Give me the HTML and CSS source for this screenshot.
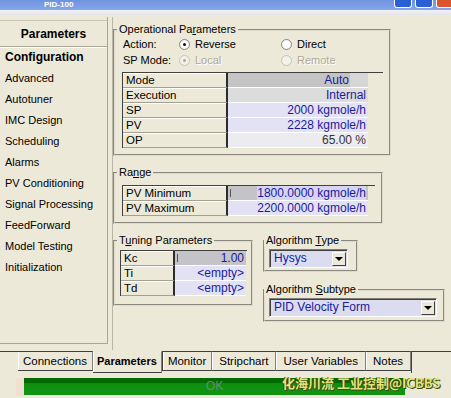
FILE: index.html
```html
<!DOCTYPE html>
<html lang="en">
<head>
    <meta charset="UTF-8">
    <title>PID-100</title>
    <link rel="stylesheet" href="styles.css">
</head>
<body>
    <div id="win">
        <div class="titlebar">
            <span class="title">PID-100</span>
            <div class="tb_btns">
                <span class="tb_btn"></span>
                <span class="tb_btn"></span>
                <span class="tb_btn close"></span>
            </div>
        </div>
        <div class="strip"></div>

        <div class="main">
            <div class="sidebar">
                <div class="side_head">Parameters</div>
                <ul class="side_list">
                    <li class="active">Configuration</li>
                    <li>Advanced</li>
                    <li>Autotuner</li>
                    <li>IMC Design</li>
                    <li>Scheduling</li>
                    <li>Alarms</li>
                    <li>PV Conditioning</li>
                    <li>Signal Processing</li>
                    <li>FeedForward</li>
                    <li>Model Testing</li>
                    <li>Initialization</li>
                </ul>
            </div>

            <div class="content">
                <fieldset class="group group_op">
                    <legend>Operational Pa<u>r</u>ameters</legend>
                    <div class="radio_row">
                        <span class="lbl">Action:</span>
                        <span class="radio"><i class="dot on"></i>Reverse</span>
                        <span class="radio"><i class="dot"></i>Direct</span>
                    </div>
                    <div class="radio_row">
                        <span class="lbl">SP Mode:</span>
                        <span class="radio off"><i class="dot on"></i>Local</span>
                        <span class="radio off"><i class="dot"></i>Remote</span>
                    </div>
                    <div class="grid grid_op">
                        <div class="key">Mode</div>
                        <div class="val v_mode"><span>Auto</span><b class="v_btn"></b></div>
                        <div class="key">Execution</div>
                        <div class="val v_grey">Internal</div>
                        <div class="key">SP</div>
                        <div class="val">2000 kgmole/h</div>
                        <div class="key">PV</div>
                        <div class="val">2228 kgmole/h</div>
                        <div class="key">OP</div>
                        <div class="val v_light">65.00 %</div>
                    </div>
                </fieldset>

                <fieldset class="group group_range">
                    <legend>Ra<u>n</u>ge</legend>
                    <div class="grid grid_op">
                        <div class="key">PV Minimum</div>
                        <div class="val v_edit"><i class="caret"></i><span class="sel">1800.0000 kgmole/h</span></div>
                        <div class="key">PV Maximum</div>
                        <div class="val">2200.0000 kgmole/h</div>
                    </div>
                </fieldset>

                <div class="bottom_row">
                    <fieldset class="group group_tuning">
                        <legend>T<u>u</u>ning Parameters</legend>
                        <div class="grid grid_tune">
                            <div class="key">Kc</div>
                            <div class="val v_edit"><i class="caret"></i><span>1.00</span></div>
                            <div class="key">Ti</div>
                            <div class="val">&lt;empty&gt;</div>
                            <div class="key">Td</div>
                            <div class="val">&lt;empty&gt;</div>
                        </div>
                    </fieldset>

                    <div class="algo_col">
                        <fieldset class="group group_type">
                            <legend>Algorithm <u>T</u>ype</legend>
                            <div class="combo combo_type">
                                <span class="combo_text">Hysys</span>
                                <span class="combo_btn"><i></i></span>
                            </div>
                        </fieldset>
                        <fieldset class="group group_sub">
                            <legend>Algorithm <u>S</u>ubtype</legend>
                            <div class="combo combo_sub">
                                <span class="combo_text">PID Velocity Form</span>
                                <span class="combo_btn"><i></i></span>
                            </div>
                        </fieldset>
                    </div>
                </div>
            </div>
        </div>

        <ul class="tabs">
            <li class="tab_gap"></li>
            <li class="tab">Connections</li>
            <li class="tab active">Parameters</li>
            <li class="tab boxed">Monitor</li>
            <li class="tab wide">Stripchart</li>
            <li class="tab wide">User Variables</li>
            <li class="tab wide">Notes</li>
            <li class="tab_rest"></li>
        </ul>

        <div class="status">
            <span class="status_edge"></span>
            <div class="status_bar">OK</div>
            <span class="watermark">化海川流 工业控制@ICBBS</span>
        </div>
    </div>
</body>
</html>
```

FILE: styles.css
```css
* {
    margin: 0;
    padding: 0;
    list-style: none;
    box-sizing: border-box;
}

body {
    background-color: #ece9d8;
    font-family: "Liberation Sans", Arial, sans-serif;
    font-size: 11px;
    color: #000;
}

#win {
    width: 451px;
    height: 398px;
    overflow: hidden;
    position: relative;
}

/* title bar */
.titlebar {
    height: 10px;
    background: linear-gradient(#6d93e0, #86a6ea);
    display: flex;
    justify-content: space-between;
}

.title {
    color: #fff;
    font-weight: bold;
    font-size: 8px;
    line-height: 10px;
    margin-left: 44px;
}

.tb_btns {
    display: flex;
    gap: 3px;
    margin-right: -3px;
}

.tb_btn {
    width: 18px;
    height: 8px;
    background-color: #2b5fd4;
    border: 1px solid #fff;
    border-top: none;
    border-radius: 0 0 3px 3px;
}

.tb_btn.close {
    background-color: #d9562e;
}

.strip {
    height: 7px;
    background: linear-gradient(#f2f3fb, #e6e6ea 60%, #ece9d8);
}

/* main */
.main {
    display: flex;
    height: 333px;
}

.sidebar {
    width: 108px;
    padding-top: 3px;
    border-right: 1px solid #a9a698;
    border-bottom: 1px solid #a9a698;
    height: 327px;
}

.side_head {
    height: 27px;
    border-top: 1px solid #c9c6b6;
    border-bottom: 1px solid #a9a698;
    box-shadow: 0 1px 0 #fff;
    font-weight: bold;
    font-size: 12px;
    line-height: 26px;
    text-align: center;
}

.side_list li {
    height: 21px;
    line-height: 21px;
    padding-left: 5px;
}

.side_list li.active {
    font-weight: bold;
    font-size: 12px;
}

.content {
    margin-left: 4px;
    border-left: 1px solid #b9b6a6;
    flex: 1;
    padding-top: 6px;
}

/* group boxes */
.group {
    border: 2px groove #dedbcc;
    padding: 0 6px 6px 7px;
}

.group legend {
    margin-left: -5px;
    padding: 0 2px;
    line-height: 13px;
}

.group_op {
    width: 270px;
}

.radio_row {
    display: flex;
    height: 16px;
    line-height: 16px;
    padding-left: 1px;
}

.lbl {
    width: 56px;
}

.radio {
    display: flex;
    align-items: center;
    width: 102px;
}

.dot {
    width: 11px;
    height: 11px;
    border-radius: 50%;
    background: radial-gradient(#fff 50%, #dcdad2);
    border: 1px solid #8b8a82;
    margin-right: 5px;
    position: relative;
}

.dot.on::after {
    content: "";
    position: absolute;
    left: 3px;
    top: 3px;
    width: 3px;
    height: 3px;
    border-radius: 50%;
    background-color: #111;
}

.radio.off {
    color: #aca899;
    text-shadow: 1px 1px 0 #fff;
}

.radio.off .dot {
    border-color: #c6c3b6;
    background: #f2f1ea;
}

.radio.off .dot.on::after {
    background-color: #aca899;
}

/* property grids */
.grid {
    display: grid;
    border-top: 1px solid #404040;
    border-left: 1px solid #404040;
}

.grid_op {
    margin-top: 4px;
    grid-template-columns: 105px 140px;
}

.key {
    height: 15px;
    line-height: 14px;
    padding-left: 3px;
    border-bottom: 1px solid #a4a194;
    border-right: 2px solid #2c2c2c;
    box-shadow: inset 0 1px 0 #fff;
    font-size: 11.5px;
}

.val {
    height: 15px;
    line-height: 14px;
    padding-right: 2px;
    text-align: right;
    color: #1a1a9c;
    background-color: #e2e2f4;
    border-bottom: 1px solid #fff;
    font-size: 12px;
}

.v_mode {
    display: flex;
    justify-content: flex-end;
    padding-right: 0;
    background-color: #c4c4c4;
}

.v_btn {
    width: 18px;
    margin-left: 1px;
    background-color: #d6d6d6;
}

.v_grey {
    background-color: #dcdcdc;
}

.v_light {
    background-color: #ebebf0;
    color: #333;
}

.v_edit {
    display: flex;
    justify-content: space-between;
    align-items: center;
    background-color: #c4c4c8;
    padding-left: 2px;
}

.caret {
    width: 1px;
    height: 8px;
    background-color: #555;
}

.sel {
    background-color: #d6d6f2;
}

.group_range {
    width: 270px;
    margin-top: 10px;
}

.group_range .grid_op {
    margin-top: 6px;
}

/* bottom area */
.bottom_row {
    display: flex;
    margin-top: 10px;
}

.group_tuning {
    width: 140px;
    height: 72px;
    padding-left: 5px;
    padding-right: 4px;
}

.group_tuning legend {
    margin-left: -3px;
}

.grid_tune {
    margin-top: 3px;
    grid-template-columns: 54px 71px;
}

.algo_col {
    margin-left: 10px;
}

.group_type {
    width: 95px;
    height: 38px;
    padding-left: 4px;
}

.group_sub {
    width: 180px;
    height: 39px;
    margin-top: 11px;
    padding-left: 4px;
}

.group_type legend,
.group_sub legend {
    margin-left: -5px;
}

.combo {
    display: flex;
    height: 19px;
    margin-top: 2px;
    border: 1px solid #7f7d72;
    border-right-color: #fff;
    border-bottom-color: #fff;
    box-shadow: inset 1px 1px 0 #404040;
    background-color: #dcdcf0;
    color: #1a1a9c;
    font-size: 12px;
}

.combo_type {
    width: 79px;
}

.combo_sub {
    width: 168px;
}

.combo_text {
    flex: 1;
    line-height: 17px;
    padding-left: 4px;
}

.combo_btn {
    width: 14px;
    margin: 2px 1px 1px 0;
    background-color: #ece9d8;
    border: 1px solid #fff;
    border-right-color: #404040;
    border-bottom-color: #404040;
    display: flex;
    align-items: center;
    justify-content: center;
}

.combo_btn i {
    border-left: 4px solid transparent;
    border-right: 4px solid transparent;
    border-top: 4px solid #000;
}

/* tabs */
.tabs {
    display: flex;
    height: 22px;
    margin-top: 1px;
}

.tab_gap {
    width: 18px;
    border-top: 1px solid #404040;
}

.tab_rest {
    flex: 1;
    border-top: 1px solid #404040;
    border-left: 1px solid #404040;
}

.tab {
    padding: 0 5px;
    height: 20px;
    line-height: 19px;
    border-top: 1px solid #404040;
    border-right: 1px solid #808080;
    border-bottom: 1px solid #404040;
    box-shadow: inset 1px 0 0 #fff;
    font-size: 11.5px;
}

.tab.wide {
    padding: 0 7px;
}

.tab.active {
    font-weight: bold;
    border-top-color: transparent;
    height: 22px;
    padding: 0 4px;
    font-size: 11px;
}

.tab.boxed {
    border-left: 1px solid #404040;
}

/* status */
.status {
    display: flex;
    margin: 5px 0 0 16px;
    height: 18px;
}

.status_edge {
    width: 8px;
    background-color: #f2dfd2;
}

.status_bar {
    width: 381px;
    background: linear-gradient(#006a00 0, #006a00 30%, #0e8e0e 30%, #129612);
    color: #6d8a6d;
    text-align: center;
    line-height: 17px;
    font-size: 12px;
    border-bottom: 1px solid #e8f0e0;
}

.watermark {
    position: absolute;
    left: 282px;
    top: 373px;
    font-family: "Noto Sans CJK SC", sans-serif;
    font-size: 13px;
    font-weight: bold;
    color: #e3e37a;
    text-shadow: 1px 1px 0 #3a4a10, -1px 0 0 #3a4a10;
}
```
